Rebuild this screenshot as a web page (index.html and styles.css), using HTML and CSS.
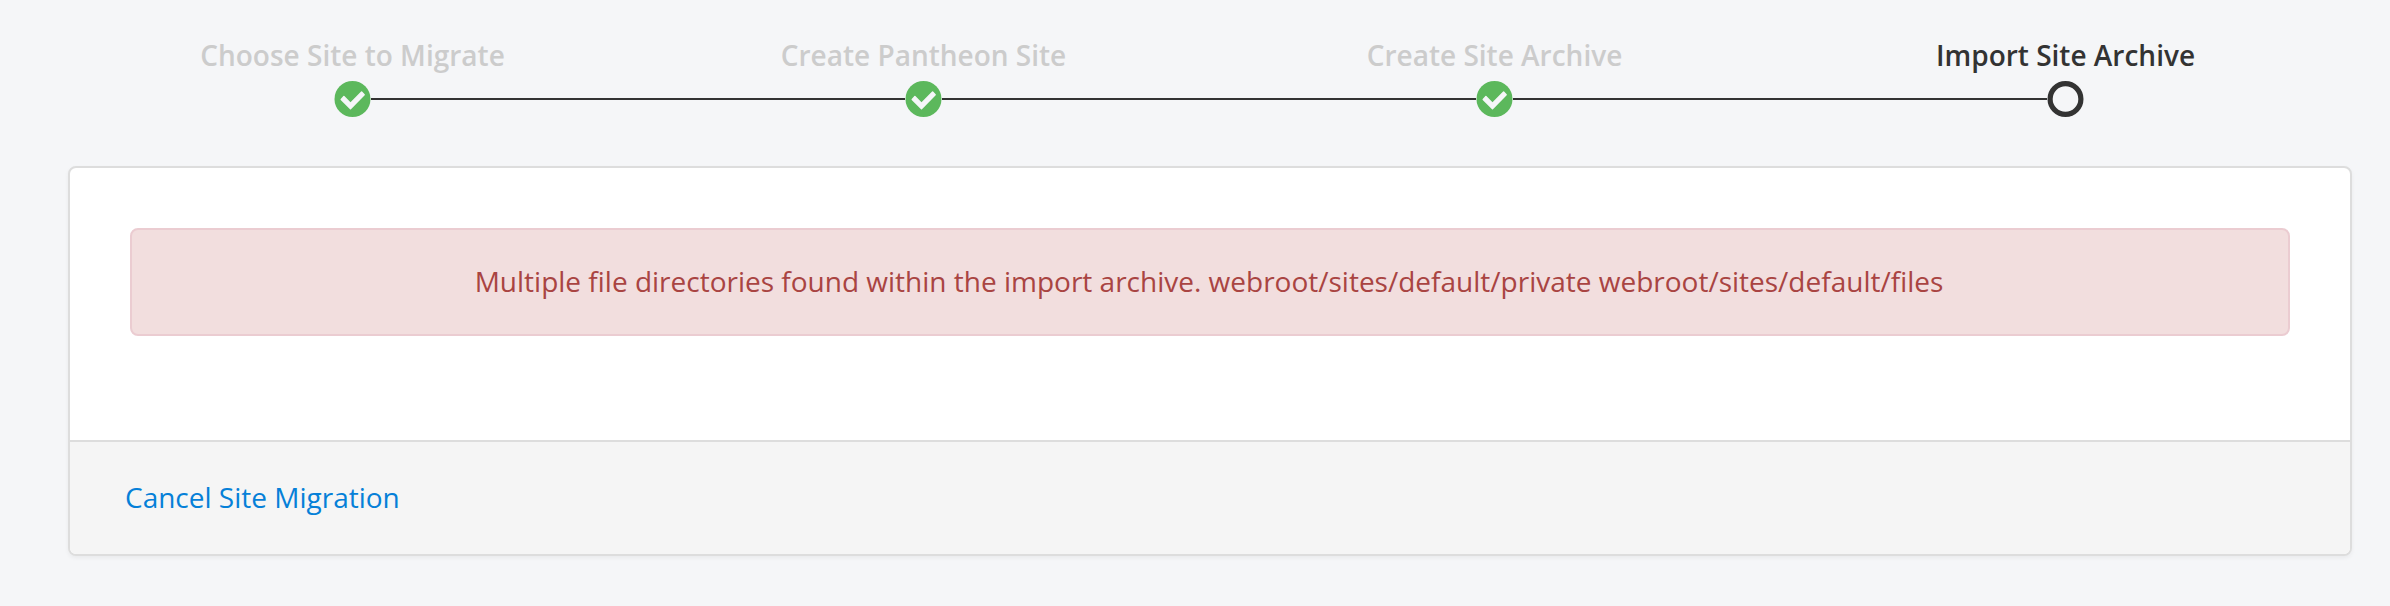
FILE: index.html
```html
<!DOCTYPE html>
<html lang="en">
<head>
<meta charset="utf-8">
<title>Import Site Archive</title>
<link rel="stylesheet" href="styles.css">
</head>
<body>
<main class="page">
  <ol class="steps">
    <li class="step">
      <span class="step-label">Choose Site to Migrate</span>
      <span class="track"><i class="line none"></i><svg class="icon" viewBox="-0.5 0 37 36"><circle cx="18" cy="18" r="18" fill="#5cb85c"/><path class="check" d="M6.7 18.4 L9.4 15.6 L16 22.2 L27.1 11.1 L29.7 13.8 L16 27.7 Z"/></svg><i class="line"></i></span>
    </li>
    <li class="step">
      <span class="step-label">Create Pantheon Site</span>
      <span class="track"><i class="line"></i><svg class="icon" viewBox="-0.5 0 37 36"><circle cx="18" cy="18" r="18" fill="#5cb85c"/><path class="check" d="M6.7 18.4 L9.4 15.6 L16 22.2 L27.1 11.1 L29.7 13.8 L16 27.7 Z"/></svg><i class="line"></i></span>
    </li>
    <li class="step">
      <span class="step-label">Create Site Archive</span>
      <span class="track"><i class="line"></i><svg class="icon" viewBox="-0.5 0 37 36"><circle cx="18" cy="18" r="18" fill="#5cb85c"/><path class="check" d="M6.7 18.4 L9.4 15.6 L16 22.2 L27.1 11.1 L29.7 13.8 L16 27.7 Z"/></svg><i class="line"></i></span>
    </li>
    <li class="step current">
      <span class="step-label">Import Site Archive</span>
      <span class="track"><i class="line"></i><svg class="icon" viewBox="-0.5 0 37 36"><circle class="ring" cx="18" cy="18" r="15.4"/></svg><i class="line none"></i></span>
    </li>
  </ol>
  <section class="panel">
    <div class="panel-body">
      <div class="alert">Multiple file directories found within the import archive. webroot/sites/default/private webroot/sites/default/files</div>
    </div>
    <footer class="panel-footer"><a class="cancel" href="#">Cancel Site Migration</a></footer>
  </section>
</main>
</body>
</html>
```
FILE: styles.css
```css
* { box-sizing: border-box; }
body {
  margin: 0;
  background: #f5f6f8;
  color: #333;
  font: 28px/40px "Open Sans", sans-serif;
}
.page { padding: 35px 38px 50px 68px; height: 606px; }
.steps {
  display: grid;
  grid-template-columns: repeat(4, 571px);
  list-style: none;
  margin: 0 0 49px -1px;
  padding: 0;
}
.step { color: #ccc; font-weight: 600; text-align: center; }
.current { color: #333; }
.step-label { display: block; height: 46px; }
.track { display: flex; align-items: center; height: 36px; }
.line { flex: 1; height: 2px; background: #333; }
.none { background: none; }
.icon { display: block; width: 37px; height: 36px; }
.check { fill: #f5f6f8; stroke: #f5f6f8; stroke-width: 1.4; stroke-linejoin: round; }
.ring { fill: none; stroke: #333; stroke-width: 5.2; }
.panel {
  width: 2284px;
  height: 390px;
  border: 2px solid #ddd;
  border-radius: 8px;
  background: #fff;
  box-shadow: 0 2px 4px rgba(0, 0, 0, .05);
  overflow: hidden;
}
.panel-body { height: 272px; padding: 60px; }
.alert {
  height: 108px;
  padding: 31px 31px 33px 29px;
  border: 2px solid #ebccd1;
  border-radius: 8px;
  background: #f2dede;
  color: #a94442;
  text-align: center;
}
.panel-footer {
  height: 114px;
  padding: 35px 55px;
  border-top: 2px solid #ddd;
  background: #f5f5f5;
}
.cancel { color: #0580d8; text-decoration: none; }
```
